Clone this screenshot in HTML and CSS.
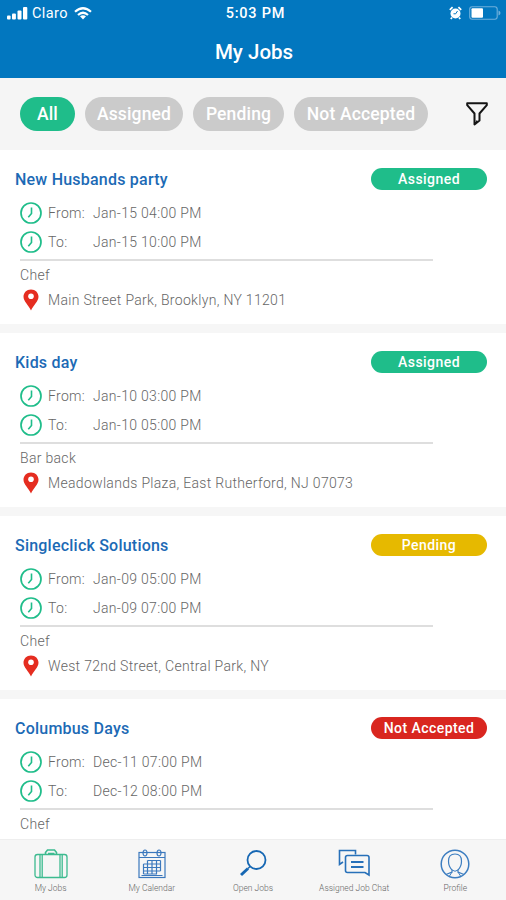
FILE: index.html
```html
<!DOCTYPE html>
<html lang="en">
<head>
  <meta charset="UTF-8">
  <meta name="viewport" content="width=device-width, initial-scale=1.0">
  <title>My Jobs</title>
  <link rel="stylesheet" href="styles.css">
</head>
<body>
<svg class="defs">
  <symbol id="clock" viewBox="0 0 22 22">
    <circle cx="11" cy="11" r="10" fill="none" stroke="#1fbd8a" stroke-width="1.7"/>
    <path d="M11.5 5.5v6l-3.2 3.8" fill="none" stroke="#1fbd8a" stroke-width="1.6"/>
  </symbol>
  <symbol id="pin" viewBox="0 0 16 22">
    <path d="M8 .5C3.600.5.5 3.700.5 7.800.5 12.500 5.500 16 8 21.500 10.500 16 15.500 12.500 15.500 7.800 15.500 3.700 12.400.5 8 .5z" fill="#e52d20"/>
    <circle cx="8" cy="7.300" r="2.800" fill="#fff"/>
  </symbol>
</svg>

<header class="header">
  <div class="status">
    <div class="carrier">
      <svg width="21" height="13" viewBox="0 0 21 13" fill="#fff">
        <rect x="0" y="8.500" width="3.600" height="4" rx="1"/>
        <rect x="5" y="6.500" width="3.900" height="6" rx="1"/>
        <rect x="10.500" y="3.500" width="4" height="9" rx="1"/>
        <rect x="16" y="0" width="4.300" height="12.500" rx="1"/>
      </svg>
      <span class="carrier-name">Claro</span>
      <svg width="18" height="13" viewBox="0 0 18 13" fill="none" stroke="#fff" stroke-width="2.200">
        <path d="M1 4.800Q9-2.300 17 4.800"/>
        <path d="M4 8Q9 3.500 14 8"/>
        <path d="M9 12.500L6 9.300Q9 7.300 12 9.300z" fill="#fff" stroke="none"/>
      </svg>
    </div>
    <span class="time">5:03 PM</span>
    <div class="power">
      <svg width="13" height="14" viewBox="0 0 13 14">
        <circle cx="6.500" cy="7.500" r="5" fill="#fff"/>
        <path d="M.8 3.800L3.600 1.200M12.200 3.800L9.400 1.200M3 11.500L1.800 13M10 11.500L11.200 13" stroke="#fff" stroke-width="1.800"/>
        <path d="M8.500 5L6.700 7.800H4.500" fill="none" stroke="#0277bf" stroke-width="1"/>
      </svg>
      <svg width="32" height="14" viewBox="0 0 32 14">
        <rect x=".7" y=".7" width="27.500" height="12.600" rx="2.500" fill="none" stroke="#6fb0dc" stroke-width="1.100"/>
        <rect x="2.500" y="2.200" width="11.500" height="9.600" rx="1" fill="#fff"/>
        <path d="M29.500 4.500q2 .6 2 2.500t-2 2.500z" fill="#6fb0dc"/>
      </svg>
    </div>
  </div>
  <h1 class="title">My Jobs</h1>
</header>

<nav class="filters">
  <span class="pill pill-all active">All</span>
  <span class="pill pill-assigned">Assigned</span>
  <span class="pill pill-pending">Pending</span>
  <span class="pill pill-not">Not Accepted</span>
  <svg class="funnel" width="22" height="24" viewBox="0 0 22 24" fill="none" stroke="#151515" stroke-width="2" stroke-linejoin="round">
    <path d="M1.200 1.200H20.800V3.200L13.500 11.500V18.500L8.500 22.500V11.500L1.200 3.200z"/>
    <path d="M10.500 21V18.500" stroke-width="1.500"/>
  </svg>
</nav>

<main class="jobs">
  <article class="job">
    <div class="job-head"><h2 class="name">New Husbands party</h2><span class="badge assigned">Assigned</span></div>
    <div class="when"><svg class="clock"><use href="#clock"/></svg><span class="label">From:</span><span class="date">Jan-15 04:00 PM</span></div>
    <div class="when"><svg class="clock"><use href="#clock"/></svg><span class="label">To:</span><span class="date">Jan-15 10:00 PM</span></div>
    <div class="role">Chef</div>
    <div class="place"><svg class="pin"><use href="#pin"/></svg><span>Main Street Park, Brooklyn, NY 11201</span></div>
  </article>
  <article class="job">
    <div class="job-head"><h2 class="name">Kids day</h2><span class="badge assigned">Assigned</span></div>
    <div class="when"><svg class="clock"><use href="#clock"/></svg><span class="label">From:</span><span class="date">Jan-10 03:00 PM</span></div>
    <div class="when"><svg class="clock"><use href="#clock"/></svg><span class="label">To:</span><span class="date">Jan-10 05:00 PM</span></div>
    <div class="role">Bar back</div>
    <div class="place"><svg class="pin"><use href="#pin"/></svg><span>Meadowlands Plaza, East Rutherford, NJ 07073</span></div>
  </article>
  <article class="job">
    <div class="job-head"><h2 class="name">Singleclick Solutions</h2><span class="badge pending">Pending</span></div>
    <div class="when"><svg class="clock"><use href="#clock"/></svg><span class="label">From:</span><span class="date">Jan-09 05:00 PM</span></div>
    <div class="when"><svg class="clock"><use href="#clock"/></svg><span class="label">To:</span><span class="date">Jan-09 07:00 PM</span></div>
    <div class="role">Chef</div>
    <div class="place"><svg class="pin"><use href="#pin"/></svg><span>West 72nd Street, Central Park, NY</span></div>
  </article>
  <article class="job">
    <div class="job-head"><h2 class="name">Columbus Days</h2><span class="badge rejected">Not Accepted</span></div>
    <div class="when"><svg class="clock"><use href="#clock"/></svg><span class="label">From:</span><span class="date">Dec-11 07:00 PM</span></div>
    <div class="when"><svg class="clock"><use href="#clock"/></svg><span class="label">To:</span><span class="date">Dec-12 08:00 PM</span></div>
    <div class="role">Chef</div>
  </article>
</main>

<footer class="tabs">
  <div class="tab">
    <svg width="34" height="30" viewBox="0 0 34 30" fill="none" stroke="#3dbb90" stroke-width="1.300">
      <rect x="1" y="5.500" width="32" height="23" rx="2.500"/>
      <path d="M6 5.500v23M8.200 5.500v23M26 5.500v23M28.200 5.500v23"/>
      <path d="M11.500 5.500V3.500L13.500 1H20.500L22.500 3.500V5.500M14 4.500H20.500" stroke-width="1.600"/>
    </svg>
    <span>My Jobs</span>
  </div>
  <div class="tab">
    <svg width="28" height="30" viewBox="0 0 28 30" fill="none" stroke="#3b78bd" stroke-width="1.200">
      <rect x="1" y="3.500" width="26" height="25"/>
      <path d="M1 8.500H27M3.500 26.500H24.500"/>
      <ellipse cx="7" cy="4" rx="2" ry="3"/>
      <ellipse cx="21" cy="4" rx="2" ry="3"/>
      <path d="M9.500 11.500H22.500M5.500 15H22.500M5.500 18.500H22.500M5.500 22H22.500M5.500 25H19M5.500 15V25M9.500 11.500V25M14 11.500V25M18.500 11.500V25M22.500 11.500V22"/>
    </svg>
    <span>My Calendar</span>
  </div>
  <div class="tab">
    <svg width="28" height="28" viewBox="0 0 28 28" fill="none" stroke="#1667b3">
      <circle cx="17.500" cy="11" r="9" stroke-width="1.800"/>
      <path d="M11 17.500L9 19.500" stroke-width="1.500"/>
      <path d="M9 19.500L2 26" stroke-width="3"/>
    </svg>
    <span>Open Jobs</span>
  </div>
  <div class="tab">
    <svg width="32" height="28" viewBox="0 0 32 28" fill="none" stroke="#2770b9" stroke-width="1.600">
      <path d="M5 13L1.500 15.500V1.500H17.500V5.500"/>
      <path d="M9.500 6.500H29Q31 6.500 31 8.500V26L27 23.500H9.500Q7.500 23.500 7.500 21.500V8.500Q7.500 6.500 9.500 6.500z"/>
      <path d="M13 13H25.500M13 18H25.500" stroke-width="1.900"/>
    </svg>
    <span>Assigned Job Chat</span>
  </div>
  <div class="tab">
    <svg width="30" height="30" viewBox="0 0 30 30" fill="none" stroke="#3c7dc0" stroke-width="1.200">
      <circle cx="15" cy="15" r="13.800" stroke-width="1.500"/>
      <path d="M15 5C10.500 5 8.500 8 8.500 12C8.500 16 10 19 12 21V23L6 25.500M15 5C19.500 5 21.500 8 21.500 12C21.500 16 20 19 18 21V23L24 25.500"/>
      <path d="M12 21Q15 23.500 18 21M12 23L9.500 27M18 23L20.500 27" stroke-width="1"/>
    </svg>
    <span>Profile</span>
  </div>
</footer>
</body>
</html>
```
FILE: styles.css
```css
* {
  margin: 0;
  padding: 0;
  box-sizing: border-box;
}
body {
  display: flex;
  flex-direction: column;
  width: 506px;
  height: 900px;
  overflow: hidden;
  font-family: Roboto, "Liberation Sans", sans-serif;
  background-color: #fff;
}
svg {
  display: block;
  flex-shrink: 0;
}
.defs {
  display: none;
}

.header {
  flex: 0 0 78px;
  background-color: #0277bf;
  color: #fff;
}
.status {
  display: grid;
  grid-template-columns: 1fr auto 1fr;
  align-items: center;
  height: 26px;
  padding: 0 5px 0 7px;
}
.carrier {
  display: flex;
  align-items: center;
  font-size: 14.5px;
}
.carrier-name {
  margin: 1px 6px 0 4px;
  letter-spacing: 0.4px;
}
.time {
  padding: 1px 0 0 3px;
  font-size: 14.5px;
  font-weight: 500;
  letter-spacing: 0.8px;
}
.power {
  display: flex;
  justify-content: flex-end;
  gap: 7px;
}
.title {
  height: 52px;
  padding-left: 2px;
  line-height: 53px;
  text-align: center;
  font-size: 20.5px;
  font-weight: 500;
}

.filters {
  display: flex;
  align-items: center;
  flex: 0 0 72px;
  gap: 10px;
  padding: 0 18px 0 20px;
  background-color: #f5f5f5;
}
.pill {
  height: 34px;
  line-height: 34px;
  border-radius: 17px;
  background-color: #cbcbcb;
  color: #fff;
  font-size: 17.5px;
  font-weight: 500;
  letter-spacing: 0.15px;
  text-align: center;
}
.pill-all { width: 55px; }
.pill-assigned { width: 98px; }
.pill-pending { width: 91px; }
.pill-not { width: 134px; }
.active {
  background-color: #1fbd8a;
}
.funnel {
  margin-left: auto;
}

.jobs {
  flex: 1;
  overflow: hidden;
}
.job {
  height: 183px;
  padding: 18px 19px 0 20px;
  border-bottom: 9px solid #f6f6f6;
  color: #666;
  font-size: 14px;
  font-weight: 300;
  letter-spacing: 0.31px;
}
.job-head {
  display: flex;
  justify-content: space-between;
  align-items: center;
  height: 22px;
  margin: 0 0 9px -5px;
}
.name {
  color: #1c6ab5;
  font-size: 16px;
  font-weight: 500;
  letter-spacing: 0.22px;
}
.badge {
  width: 116px;
  height: 22px;
  line-height: 22px;
  border-radius: 11px;
  color: #fff;
  font-size: 14px;
  font-weight: 500;
  letter-spacing: 0.45px;
  text-align: center;
}
.assigned { background-color: #1fbd8a; }
.pending { background-color: #e6b900; }
.rejected { background-color: #d9261f; }
.when {
  display: flex;
  align-items: center;
  height: 28.5px;
}
.clock {
  width: 22px;
  height: 22px;
  margin-right: 6px;
}
.label {
  width: 45px;
}
.role {
  width: 413px;
  margin-top: 2.5px;
  padding-top: 6px;
  height: 27px;
  line-height: 17px;
  border-top: 2px solid #dedede;
}
.place {
  display: flex;
  align-items: center;
  height: 29px;
}
.pin {
  width: 16px;
  height: 22px;
  margin: 0 9px 0 3px;
}

.tabs {
  display: grid;
  grid-template-columns: repeat(5, 101.2px);
  flex: 0 0 61px;
  border-top: 1px solid #eee;
  background-color: #f6f6f6;
}
.tab {
  display: flex;
  flex-direction: column;
  align-items: center;
  justify-content: space-between;
  padding: 9px 0 7px;
  color: #666;
  font-size: 8.5px;
  font-weight: 300;
  line-height: 10px;
}
```
